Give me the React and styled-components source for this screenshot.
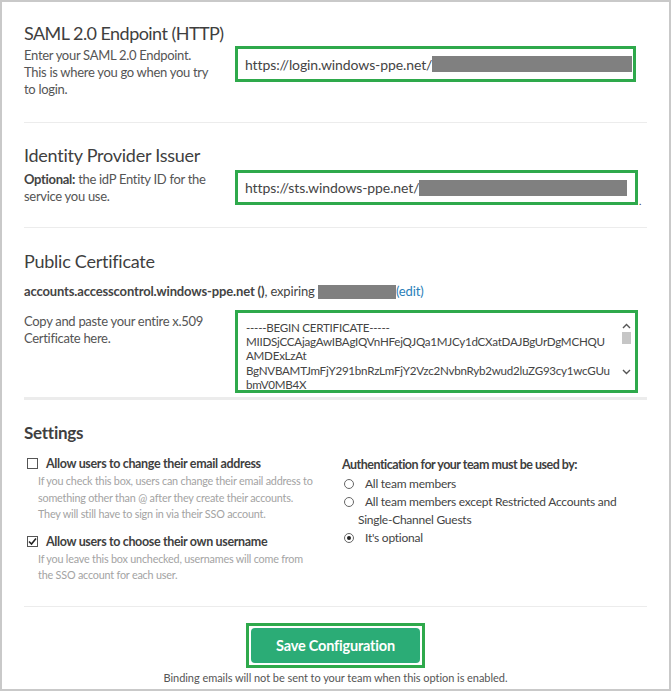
import React from "react";
import styled, { createGlobalStyle } from "styled-components";

const Global = createGlobalStyle`
  html, body { margin: 0; padding: 0; background: #fff; }
  body { font-family: Lato, "Open Sans", sans-serif; color: #444; }
  * { box-sizing: border-box; }
`;

const Frame = styled.div`
  width: 671px;
  height: 691px;
  border: 2px solid #c9c9c9;
  padding: 0 22px;
  overflow: hidden;
`;

const Section = styled.section`
  padding: ${(p) => p.$pad || "20px 0 24px"};
  border-bottom: ${(p) => (p.$thick ? "3px" : "1px")} solid #ececec;
`;

const Heading = styled.h2`
  margin: 0;
  font-size: ${(p) => (p.$bold ? "17px" : "18px")};
  line-height: 22px;
  letter-spacing: ${(p) => p.$ls || "-0.25px"};
  font-weight: ${(p) => (p.$bold ? 700 : 400)};
  color: #3f3f3f;
`;

const Row = styled.div`
  display: grid;
  grid-template-columns: 211px 1fr;
  align-items: start;
  margin-top: ${(p) => p.$mt || "2px"};
`;

const Desc = styled.p`
  margin: 0;
  padding-top: ${(p) => p.$pt || "1px"};
  font-size: 13px;
  line-height: 17px;
  letter-spacing: -0.3px;
  color: #555;
  width: 192px;
  b { font-weight: 700; color: #444; }
`;

const FieldWrap = styled.div`
  display: flex;
  align-items: flex-end;
`;

const Highlight = styled.div`
  border: 3px solid #2ea94b;
  background: #fff;
  width: ${(p) => p.$w}px;
  height: ${(p) => p.$h}px;
  display: flex;
  align-items: center;
  padding: ${(p) => p.$pad || "0 0 0 7px"};
`;

const UrlText = styled.span`
  font-size: 14px;
  letter-spacing: -0.1px;
  color: #444;
  white-space: nowrap;
`;

const Redact = styled.span`
  display: inline-block;
  background: #808080;
  height: ${(p) => p.$h || 16}px;
  width: ${(p) => (p.$w ? `${p.$w}px` : "auto")};
  flex: ${(p) => (p.$w ? "none" : 1)};
  margin-right: ${(p) => p.$mr || 0}px;
  vertical-align: middle;
`;

const Dot = styled.span`
  font-size: 10px;
  line-height: 8px;
  margin-left: 1px;
  color: #333;
`;

const Meta = styled.p`
  margin: 11px 0 0;
  font-size: 13px;
  line-height: 17px;
  letter-spacing: -0.15px;
  color: #444;
  display: flex;
  align-items: center;
  b { font-weight: 700; }
  a { color: #2a80b9; text-decoration: none; }
`;

const CertBody = styled.div`
  flex: 1;
  min-width: 0;
  height: 100%;
  overflow: hidden;
  padding: 8px 0 0 8px;
  font-size: 11.6px;
  line-height: 14.2px;
  letter-spacing: -0.25px;
  color: #444;
  white-space: nowrap;
`;

const Scrollbar = styled.div`
  width: 16px;
  flex: none;
  height: 100%;
  display: flex;
  flex-direction: column;
  align-items: center;
  padding: 10px 2px 15px 0;
`;

const Thumb = styled.div`
  width: 9px;
  height: 12px;
  background: #c6c6c6;
  margin-top: 3px;
`;

const Spacer = styled.div`
  flex: 1;
`;

const Columns = styled.div`
  display: grid;
  grid-template-columns: 318px 1fr;
  margin-top: 11px;
`;

const Option = styled.div`
  display: grid;
  grid-template-columns: 17px 1fr;
  margin-bottom: ${(p) => p.$mb || 0}px;
`;

const Box = styled.span`
  width: 11px;
  height: 11px;
  border: 1px solid #555;
  margin: 3px 0 0 3px;
  display: flex;
  align-items: center;
  justify-content: center;
  background: #fff;
`;

const OptLabel = styled.div`
  font-size: 12.5px;
  font-weight: 700;
  line-height: 17px;
  letter-spacing: -0.35px;
  color: #3f3f3f;
  padding-left: 5px;
`;

const OptHelp = styled.div`
  grid-column: 1 / span 2;
  padding-left: 14px;
  max-width: 292px;
  font-size: 10.8px;
  line-height: 16.5px;
  letter-spacing: -0.2px;
  color: #a3a3a3;
  margin-top: 1px;
`;

const RadioGroup = styled.div`
  padding-top: 1px;
`;

const GroupTitle = styled.div`
  font-size: 12.5px;
  font-weight: 700;
  line-height: 17px;
  letter-spacing: -0.5px;
  color: #3f3f3f;
  margin-bottom: 2px;
`;

const RadioRow = styled.div`
  display: grid;
  grid-template-columns: 16px 1fr;
  column-gap: 5px;
  font-size: 12px;
  line-height: 18px;
  letter-spacing: -0.25px;
  color: #444;
  padding-left: 2px;
`;

const Radio = styled.span`
  width: 10px;
  height: 10px;
  border: 1px solid #666;
  border-radius: 50%;
  margin-top: 4px;
  display: flex;
  align-items: center;
  justify-content: center;
  &::after {
    content: "";
    width: 4px;
    height: 4px;
    border-radius: 50%;
    background: #222;
    display: ${(p) => (p.$on ? "block" : "none")};
  }
`;

const RadioText = styled.span`
  grid-column: 1 / span 2;
  padding-left: 14px;
`;

const Footer = styled.div`
  display: flex;
  flex-direction: column;
  align-items: center;
  padding-top: 16px;
`;

const ButtonFrame = styled.div`
  border: 3px solid #2ea94b;
  padding: 2px;
  background: #fff;
`;

const SaveButton = styled.button`
  width: 169px;
  height: 35px;
  border: none;
  border-radius: 4px;
  background: #2bac76;
  color: #fff;
  font-family: Lato, sans-serif;
  font-weight: 700;
  font-size: 14.5px;
  letter-spacing: -0.2px;
  cursor: pointer;
`;

const Note = styled.div`
  margin-top: 2px;
  font-size: 11px;
  line-height: 15px;
  letter-spacing: -0.05px;
  color: #555;
`;

const CheckMark = () => (
  <svg width="9" height="9" viewBox="0 0 9 9">
    <path d="M1 4.5 L3.5 7 L8 1.5" fill="none" stroke="#222" strokeWidth="1.6" />
  </svg>
);

const Chevron = ({ up }) => (
  <svg width="9" height="6" viewBox="0 0 9 6">
    <path d={up ? "M1 5 L4.5 1.5 L8 5" : "M1 1 L4.5 4.5 L8 1"} fill="none" stroke="#555" strokeWidth="1.4" />
  </svg>
);

export default function App() {
  return (
    <>
      <Global />
      <Frame>
        <Section $pad="20px 0 24px">
          <Heading $ls="-0.55px">SAML 2.0 Endpoint (HTTP)</Heading>
          <Row>
            <Desc>Enter your SAML 2.0 Endpoint. This is where you go when you try to login.</Desc>
            <FieldWrap>
              <Highlight $w={401} $h={36}>
                <UrlText>https://login.windows-ppe.net/</UrlText>
                <Redact $mr={1} />
              </Highlight>
            </FieldWrap>
          </Row>
        </Section>

        <Section $pad="21px 0 22px">
          <Heading>Identity Provider Issuer</Heading>
          <Row $mt="4px">
            <Desc>
              <b>Optional:</b> the idP Entity ID for the service you use.
            </Desc>
            <FieldWrap>
              <Highlight $w={403} $h={35}>
                <UrlText>https://sts.windows-ppe.net/</UrlText>
                <Redact $mr={8} />
              </Highlight>
              <Dot>.</Dot>
            </FieldWrap>
          </Row>
        </Section>

        <Section $pad="22px 0 4px" $thick>
          <Heading>Public Certificate</Heading>
          <Meta>
            <b>accounts.accesscontrol.windows-ppe.net ()</b>, expiring&nbsp;
            <Redact $w={78} $h={14} />
            <a href="#">(edit)</a>
          </Meta>
          <Row $mt="10px">
            <Desc $pt="3px">Copy and paste your entire x.509 Certificate here.</Desc>
            <FieldWrap>
              <Highlight $w={403} $h={83} $pad="0">
                <CertBody>
                  -----BEGIN CERTIFICATE-----
                  <br />
                  MIIDSjCCAjagAwIBAgIQVnHFejQJQa1MJCy1dCXatDAJBgUrDgMCHQU
                  <br />
                  AMDExLzAt
                  <br />
                  BgNVBAMTJmFjY291bnRzLmFjY2Vzc2NvbnRyb2wud2luZG93cy1wcGUu
                  <br />
                  bmV0MB4X
                </CertBody>
                <Scrollbar>
                  <Chevron up />
                  <Thumb />
                  <Spacer />
                  <Chevron />
                </Scrollbar>
              </Highlight>
            </FieldWrap>
          </Row>
        </Section>

        <Section $pad="22px 0 22px">
          <Heading $bold>Settings</Heading>
          <Columns>
            <div>
              <Option $mb={10}>
                <Box />
                <OptLabel>Allow users to change their email address</OptLabel>
                <OptHelp>
                  If you check this box, users can change their email address to something other than @ after they
                  create their accounts. They will still have to sign in via their SSO account.
                </OptHelp>
              </Option>
              <Option>
                <Box>
                  <CheckMark />
                </Box>
                <OptLabel>Allow users to choose their own username</OptLabel>
                <OptHelp>If you leave this box unchecked, usernames will come from the SSO account for each user.</OptHelp>
              </Option>
            </div>
            <RadioGroup>
              <GroupTitle>Authentication for your team must be used by:</GroupTitle>
              <RadioRow>
                <Radio />
                <span>All team members</span>
              </RadioRow>
              <RadioRow>
                <Radio />
                <span>All team members except Restricted Accounts and</span>
                <RadioText>Single-Channel Guests</RadioText>
              </RadioRow>
              <RadioRow>
                <Radio $on />
                <span>It's optional</span>
              </RadioRow>
            </RadioGroup>
          </Columns>
        </Section>

        <Footer>
          <ButtonFrame>
            <SaveButton>Save Configuration</SaveButton>
          </ButtonFrame>
          <Note>Binding emails will not be sent to your team when this option is enabled.</Note>
        </Footer>
      </Frame>
    </>
  );
}
